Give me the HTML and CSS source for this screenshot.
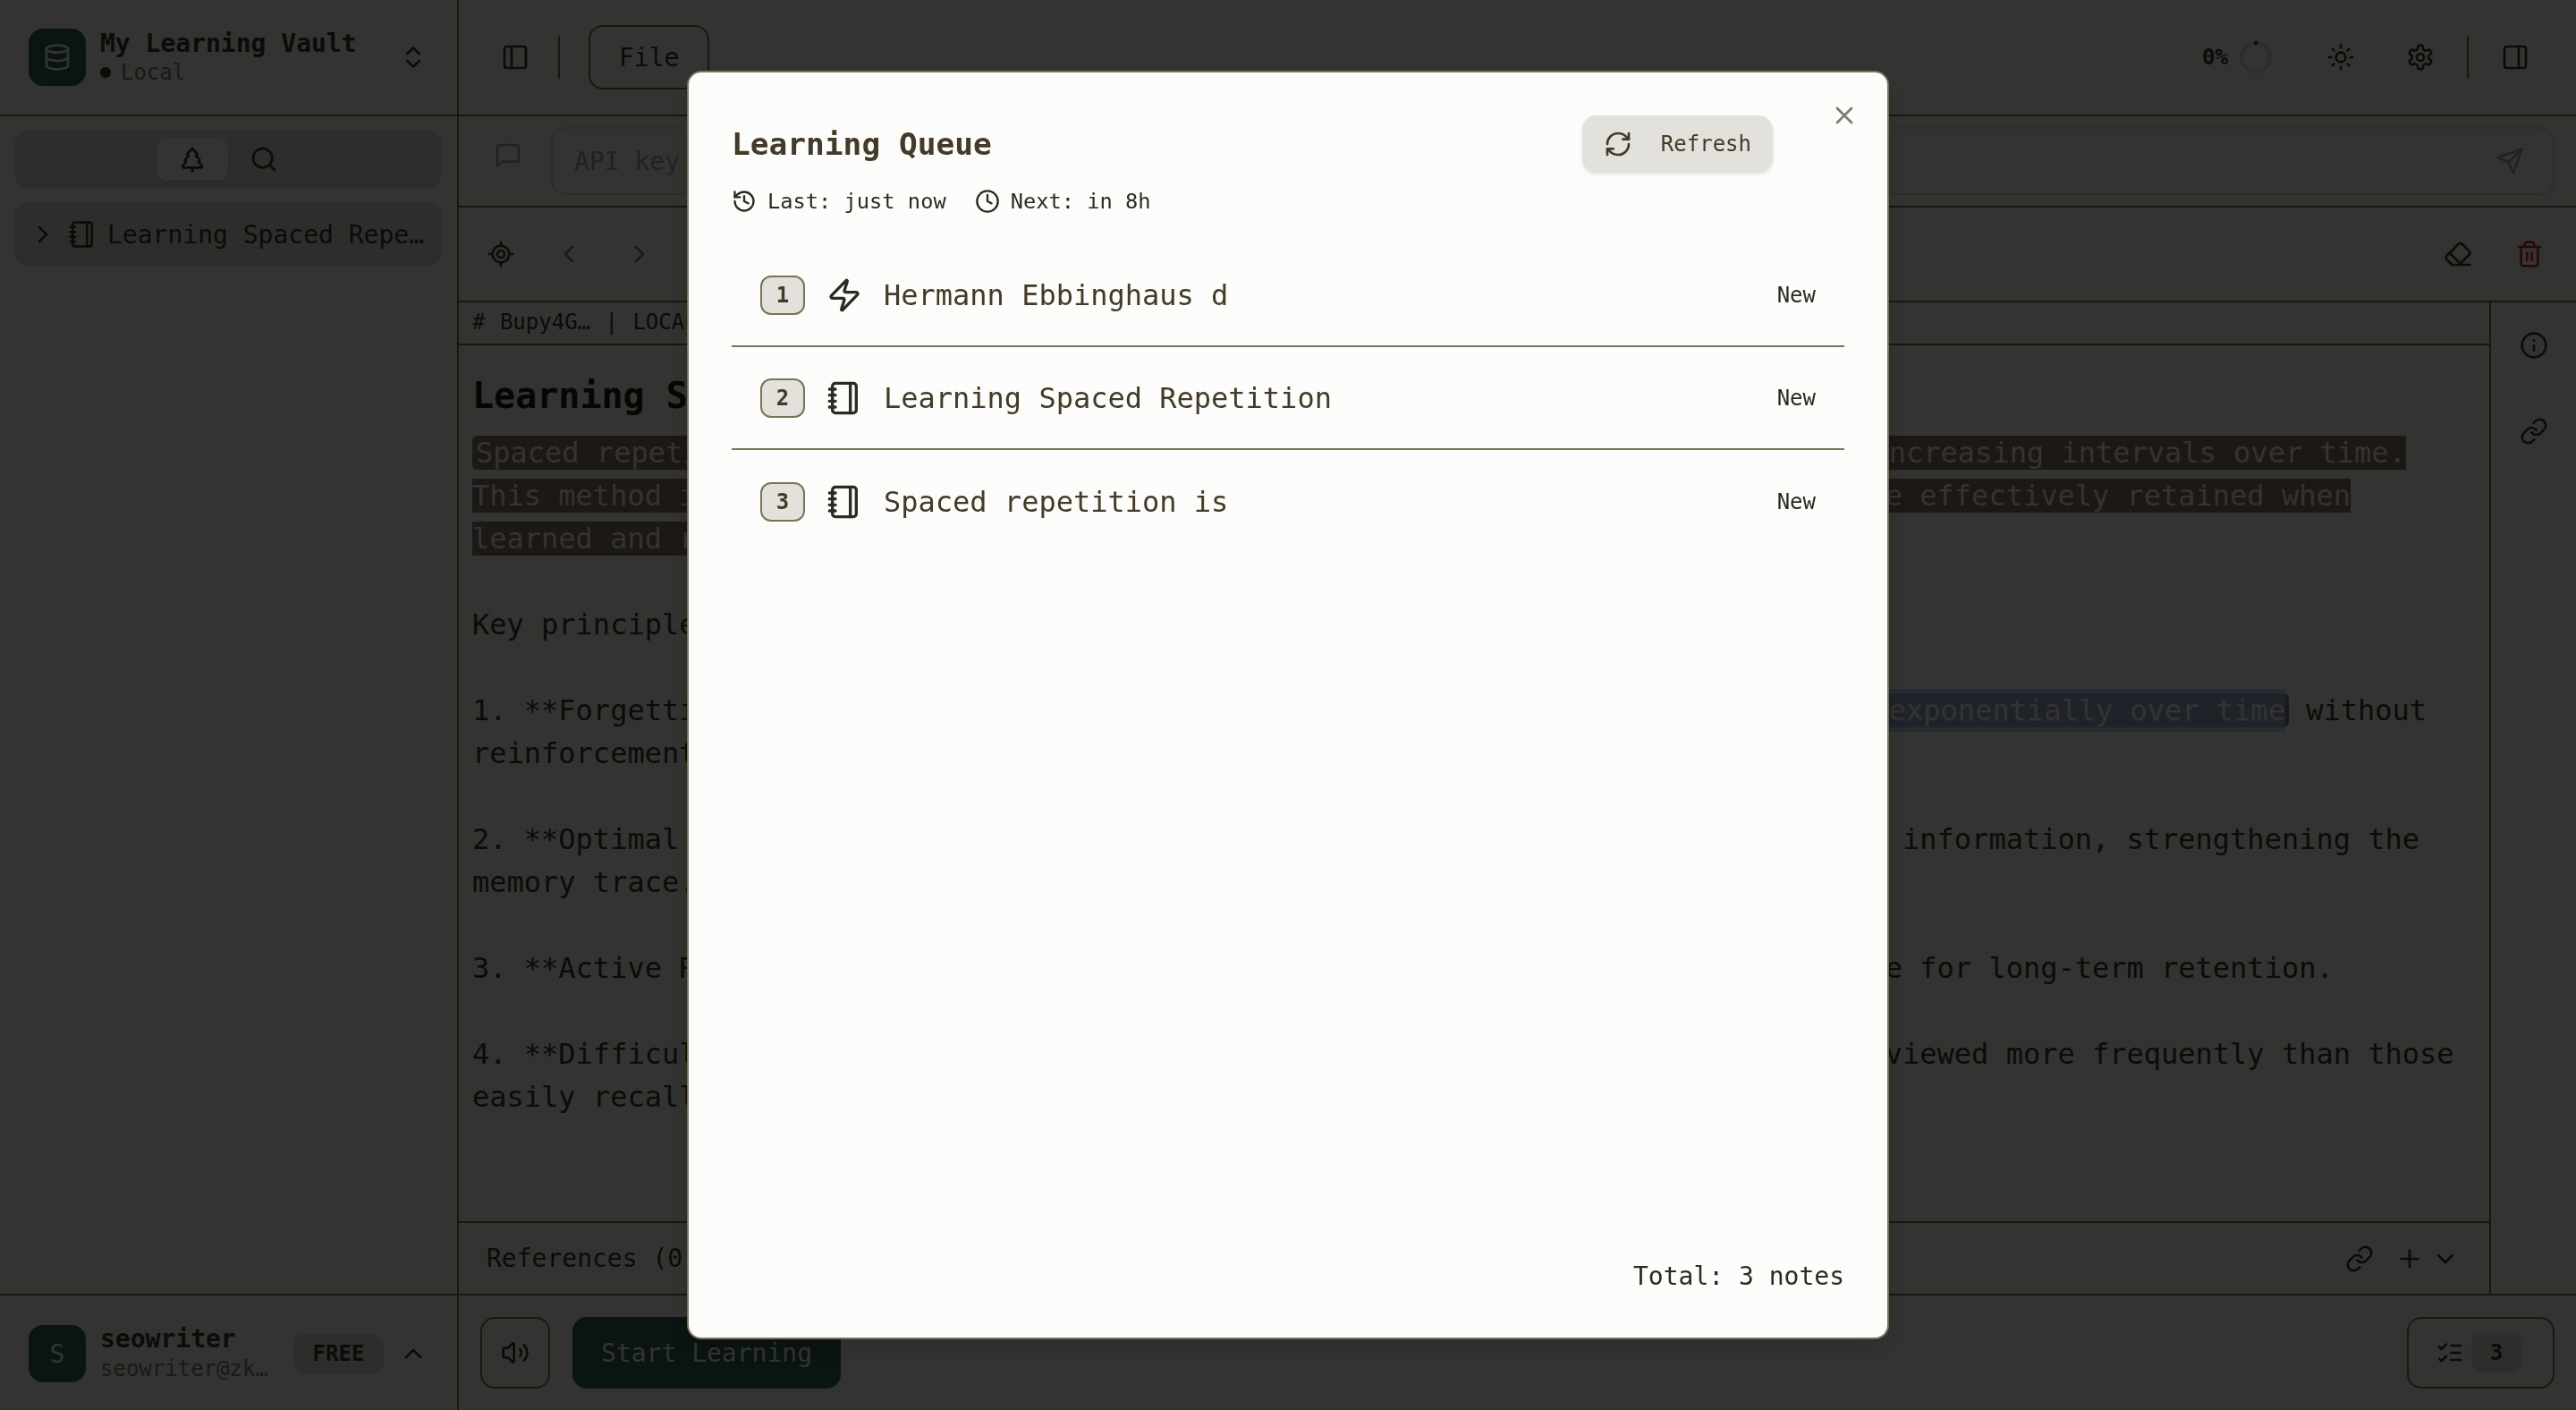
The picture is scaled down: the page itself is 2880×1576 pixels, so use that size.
FILE: index.html
```html
<!DOCTYPE html>
<html lang="en">
<head>
    <meta charset="UTF-8">
    <meta name="viewport" content="width=device-width, initial-scale=1.0">
    <title>My Learning Vault</title>
    <link rel="stylesheet" href="styles.css">
</head>
<body>
    <!-- Icon sprite -->
    <svg class="sprite" xmlns="http://www.w3.org/2000/svg">
        <symbol id="i-database" viewBox="0 0 24 24"><ellipse cx="12" cy="5" rx="9" ry="3"/><path d="M3 5V19A9 3 0 0 0 21 19V5"/><path d="M3 12A9 3 0 0 0 21 12"/></symbol>
        <symbol id="i-updown" viewBox="0 0 24 24"><path d="m7 15 5 5 5-5"/><path d="m7 9 5-5 5 5"/></symbol>
        <symbol id="i-panel-left" viewBox="0 0 24 24"><rect x="3" y="3" width="18" height="18" rx="2"/><path d="M9 3v18"/></symbol>
        <symbol id="i-panel-right" viewBox="0 0 24 24"><rect x="3" y="3" width="18" height="18" rx="2"/><path d="M15 3v18"/></symbol>
        <symbol id="i-tree" viewBox="0 0 24 24"><path d="m17 14 3 3.3a1 1 0 0 1-.7 1.7H4.7a1 1 0 0 1-.7-1.7L7 14h-.3a1 1 0 0 1-.7-1.7L9 9h-.2A1 1 0 0 1 8 7.3L12 3l4 4.3a1 1 0 0 1-.8 1.7H15l3 3.3a1 1 0 0 1-.7 1.7H17Z"/><path d="M12 22v-3"/></symbol>
        <symbol id="i-search" viewBox="0 0 24 24"><circle cx="11" cy="11" r="8"/><path d="m21 21-4.3-4.3"/></symbol>
        <symbol id="i-right" viewBox="0 0 24 24"><path d="m9 18 6-6-6-6"/></symbol>
        <symbol id="i-left" viewBox="0 0 24 24"><path d="m15 18-6-6 6-6"/></symbol>
        <symbol id="i-up" viewBox="0 0 24 24"><path d="m18 15-6-6-6 6"/></symbol>
        <symbol id="i-down" viewBox="0 0 24 24"><path d="m6 9 6 6 6-6"/></symbol>
        <symbol id="i-notebook" viewBox="0 0 24 24"><path d="M2 6h4"/><path d="M2 10h4"/><path d="M2 14h4"/><path d="M2 18h4"/><rect x="4" y="2" width="16" height="20" rx="2"/><path d="M16 2v20"/></symbol>
        <symbol id="i-chat" viewBox="0 0 24 24"><path d="M21 15a2 2 0 0 1-2 2H7l-4 4V5a2 2 0 0 1 2-2h14a2 2 0 0 1 2 2z"/></symbol>
        <symbol id="i-send" viewBox="0 0 24 24"><path d="m22 2-7 20-4-9-9-4Z"/><path d="M22 2 11 13"/></symbol>
        <symbol id="i-locate" viewBox="0 0 24 24"><path d="M2 12h3"/><path d="M19 12h3"/><path d="M12 2v3"/><path d="M12 19v3"/><circle cx="12" cy="12" r="7"/><circle cx="12" cy="12" r="3"/></symbol>
        <symbol id="i-sun" viewBox="0 0 24 24"><circle cx="12" cy="12" r="4"/><path d="M12 2v2"/><path d="M12 20v2"/><path d="m4.93 4.93 1.41 1.41"/><path d="m17.66 17.66 1.41 1.41"/><path d="M2 12h2"/><path d="M20 12h2"/><path d="m6.34 17.66-1.41 1.41"/><path d="m19.07 4.93-1.41 1.41"/></symbol>
        <symbol id="i-gear" viewBox="0 0 24 24"><path d="M12.22 2h-.44a2 2 0 0 0-2 2v.18a2 2 0 0 1-1 1.73l-.43.25a2 2 0 0 1-2 0l-.15-.08a2 2 0 0 0-2.73.73l-.22.38a2 2 0 0 0 .73 2.73l.15.1a2 2 0 0 1 1 1.72v.51a2 2 0 0 1-1 1.74l-.15.09a2 2 0 0 0-.73 2.73l.22.38a2 2 0 0 0 2.73.73l.15-.08a2 2 0 0 1 2 0l.43.25a2 2 0 0 1 1 1.73V20a2 2 0 0 0 2 2h.44a2 2 0 0 0 2-2v-.18a2 2 0 0 1 1-1.73l.43-.25a2 2 0 0 1 2 0l.15.08a2 2 0 0 0 2.73-.73l.22-.39a2 2 0 0 0-.73-2.73l-.15-.08a2 2 0 0 1-1-1.74v-.5a2 2 0 0 1 1-1.74l.15-.09a2 2 0 0 0 .73-2.73l-.22-.38a2 2 0 0 0-2.73-.73l-.15.08a2 2 0 0 1-2 0l-.43-.25a2 2 0 0 1-1-1.73V4a2 2 0 0 0-2-2z"/><circle cx="12" cy="12" r="3"/></symbol>
        <symbol id="i-eraser" viewBox="0 0 24 24"><path d="m7 21-4.3-4.3c-1-1-1-2.5 0-3.4l9.6-9.6c1-1 2.5-1 3.4 0l5.6 5.6c1 1 1 2.5 0 3.4L13 21"/><path d="M22 21H7"/><path d="m5 11 9 9"/></symbol>
        <symbol id="i-trash" viewBox="0 0 24 24"><path d="M3 6h18"/><path d="M19 6v14c0 1-1 2-2 2H7c-1 0-2-1-2-2V6"/><path d="M8 6V4c0-1 1-2 2-2h4c1 0 2 1 2 2v2"/><path d="M10 11v6"/><path d="M14 11v6"/></symbol>
        <symbol id="i-info" viewBox="0 0 24 24"><circle cx="12" cy="12" r="10"/><path d="M12 16v-4"/><path d="M12 8h.01"/></symbol>
        <symbol id="i-link" viewBox="0 0 24 24"><path d="M10 13a5 5 0 0 0 7.54.54l3-3a5 5 0 0 0-7.07-7.07l-1.72 1.71"/><path d="M14 11a5 5 0 0 0-7.54-.54l-3 3a5 5 0 0 0 7.07 7.07l1.71-1.71"/></symbol>
        <symbol id="i-plus" viewBox="0 0 24 24"><path d="M5 12h14"/><path d="M12 5v14"/></symbol>
        <symbol id="i-volume" viewBox="0 0 24 24"><path d="M11 4.702a.705.705 0 0 0-1.203-.498L6.413 7.587A1.4 1.4 0 0 1 5.416 8H3a1 1 0 0 0-1 1v6a1 1 0 0 0 1 1h2.416a1.4 1.4 0 0 1 .997.413l3.383 3.384A.705.705 0 0 0 11 19.298z"/><path d="M16 9a5 5 0 0 1 0 6"/><path d="M19.364 18.364a9 9 0 0 0 0-12.728"/></symbol>
        <symbol id="i-checks" viewBox="0 0 24 24"><path d="m3 17 2 2 4-4"/><path d="m3 7 2 2 4-4"/><path d="M13 6h8"/><path d="M13 12h8"/><path d="M13 18h8"/></symbol>
        <symbol id="i-history" viewBox="0 0 24 24"><path d="M3 12a9 9 0 1 0 9-9 9.75 9.75 0 0 0-6.74 2.74L3 8"/><path d="M3 3v5h5"/><path d="M12 7v5l4 2"/></symbol>
        <symbol id="i-clock" viewBox="0 0 24 24"><circle cx="12" cy="12" r="10"/><path d="M12 6v6l4 2"/></symbol>
        <symbol id="i-zap" viewBox="0 0 24 24"><path d="M4 14a1 1 0 0 1-.78-1.63l9.9-10.2a.5.5 0 0 1 .86.46l-1.92 6.02A1 1 0 0 0 13 10h7a1 1 0 0 1 .78 1.63l-9.9 10.2a.5.5 0 0 1-.86-.46l1.92-6.02A1 1 0 0 0 11 14z"/></symbol>
        <symbol id="i-refresh" viewBox="0 0 24 24"><path d="M3 12a9 9 0 0 1 9-9 9.75 9.75 0 0 1 6.74 2.74L21 8"/><path d="M21 3v5h-5"/><path d="M21 12a9 9 0 0 1-9 9 9.75 9.75 0 0 1-6.74-2.74L3 16"/><path d="M8 16H3v5"/></symbol>
        <symbol id="i-close" viewBox="0 0 24 24"><path d="M18 6 6 18"/><path d="m6 6 12 12"/></symbol>
    </svg>

    <!-- Sidebar -->
    <aside class="sidebar">
        <header class="vault-head">
            <div class="logo"><svg class="icon"><use href="#i-database"/></svg></div>
            <div class="vault-info">
                <div class="vault-name">My Learning Vault</div>
                <div class="vault-kind"><span class="dot"></span>Local</div>
            </div>
            <svg class="icon updown"><use href="#i-updown"/></svg>
        </header>

        <div class="side-tabs">
            <button class="side-tab active"><svg class="icon"><use href="#i-tree"/></svg></button>
            <button class="side-tab"><svg class="icon"><use href="#i-search"/></svg></button>
        </div>

        <div class="tree-item">
            <svg class="icon"><use href="#i-right"/></svg>
            <svg class="icon tree-note"><use href="#i-notebook"/></svg>
            <span class="tree-label">Learning Spaced Repetition</span>
        </div>

        <footer class="user-box">
            <div class="avatar">S</div>
            <div class="user-info">
                <div class="user-name">seowriter</div>
                <div class="user-mail">seowriter@zkid.app</div>
            </div>
            <span class="plan">FREE</span>
            <svg class="icon user-toggle"><use href="#i-up"/></svg>
        </footer>
    </aside>

    <!-- Main column -->
    <main class="main">
        <div class="topbar">
            <svg class="icon"><use href="#i-panel-left"/></svg>
            <span class="vsep"></span>
            <button class="file-btn">File</button>
            <div class="topbar-right">
                <span class="percent">0%</span>
                <span class="ring"></span>
                <svg class="icon sun"><use href="#i-sun"/></svg>
                <svg class="icon gear"><use href="#i-gear"/></svg>
                <span class="vsep"></span>
                <svg class="icon"><use href="#i-panel-right"/></svg>
            </div>
        </div>

        <div class="askbar">
            <svg class="icon dim ask-icon"><use href="#i-chat"/></svg>
            <div class="ask-input">
                <span>API key required</span>
                <svg class="icon dim"><use href="#i-send"/></svg>
            </div>
        </div>

        <div class="toolbar">
            <svg class="icon"><use href="#i-locate"/></svg>
            <svg class="icon nav-left muted"><use href="#i-left"/></svg>
            <svg class="icon nav-right muted"><use href="#i-right"/></svg>
            <div class="toolbar-right">
                <svg class="icon"><use href="#i-eraser"/></svg>
                <svg class="icon danger"><use href="#i-trash"/></svg>
            </div>
        </div>

        <div class="workspace">
            <div class="editor">
                <div class="note-id"># Bupy4G… | LOCAL</div>
                <div class="note-scroll">
                    <h1 class="note-title">Learning Spaced Repetition</h1>
                    <div class="note-body"><span class="mark-brown">Spaced repetition is a learning technique that involves reviewing information at increasing intervals over time.
This method is based on the spacing effect, which shows that memories and facts are effectively retained when
learned and reviewed over spaced sessions rather than crammed at once.</span>

Key principles:

1. **Forgetting Curve**: Hermann Ebbinghaus showed that memory retention declines <span class="mark-brown"><span class="mark-blue">exponentially over time</span></span> without
reinforcement through later review sessions.

2. **Optimal Intervals**: Reviewing right before you forget helps to reinforce the information, strengthening the
memory trace.

3. **Active Recall**: Actively retrieving information from memory is more effective for long-term retention.

4. **Difficulty Adjustment**: Items that are very difficult to remember must be reviewed more frequently than those
easily recalled.</div>
                </div>
                <div class="refs">
                    <span>References (0)</span>
                    <div class="refs-actions">
                        <svg class="icon"><use href="#i-link"/></svg>
                        <svg class="icon"><use href="#i-plus"/></svg>
                        <svg class="icon refs-more"><use href="#i-down"/></svg>
                    </div>
                </div>
            </div>
            <div class="rail">
                <svg class="icon"><use href="#i-info"/></svg>
                <svg class="icon"><use href="#i-link"/></svg>
            </div>
        </div>

        <footer class="actions">
            <button class="sound-btn"><svg class="icon"><use href="#i-volume"/></svg></button>
            <button class="start-btn">Start Learning</button>
            <button class="queue-btn">
                <svg class="icon"><use href="#i-checks"/></svg>
                <span class="queue-count">3</span>
            </button>
        </footer>
    </main>

    <!-- Modal de la file -->
    <div class="modal">
        <div class="modal-content">
            <svg class="icon modal-close"><use href="#i-close"/></svg>
            <div class="modal-head">
                <div>
                    <h2>Learning Queue</h2>
                    <div class="modal-meta">
                        <svg class="icon"><use href="#i-history"/></svg>
                        <span>Last: just now</span>
                        <svg class="icon meta-next"><use href="#i-clock"/></svg>
                        <span>Next: in 8h</span>
                    </div>
                </div>
                <button class="refresh-btn">
                    <svg class="icon"><use href="#i-refresh"/></svg>
                    Refresh
                </button>
            </div>

            <ul class="queue">
                <li class="queue-row">
                    <span class="queue-num">1</span>
                    <svg class="icon"><use href="#i-zap"/></svg>
                    <span class="queue-title">Hermann Ebbinghaus d</span>
                    <span class="queue-state">New</span>
                </li>
                <li class="queue-row">
                    <span class="queue-num">2</span>
                    <svg class="icon"><use href="#i-notebook"/></svg>
                    <span class="queue-title">Learning Spaced Repetition</span>
                    <span class="queue-state">New</span>
                </li>
                <li class="queue-row">
                    <span class="queue-num">3</span>
                    <svg class="icon"><use href="#i-notebook"/></svg>
                    <span class="queue-title">Spaced repetition is</span>
                    <span class="queue-state">New</span>
                </li>
            </ul>

            <div class="modal-total">Total: 3 notes</div>
        </div>
    </div>
</body>
</html>
```

FILE: styles.css
```css
/* Global */
* {
    box-sizing: border-box;
}

html, body {
    height: 100%;
}

body {
    margin: 0;
    display: flex;
    overflow: hidden;
    font-family: 'DejaVu Sans Mono', 'Liberation Mono', monospace;
    font-size: 28px;
    background-color: #fcfcfa;
    color: #433a28;
}

button {
    font: inherit;
    color: inherit;
    background: none;
    border: none;
    padding: 0;
}

.sprite {
    display: none;
}

.icon {
    width: 32px;
    height: 32px;
    flex: none;
    fill: none;
    stroke: currentColor;
    stroke-width: 2;
    stroke-linecap: round;
    stroke-linejoin: round;
}

.dim {
    color: #aaa89f;
}

.muted {
    color: #857f70;
}

.danger {
    color: #dc2626;
}

.vsep {
    width: 2px;
    height: 48px;
    background-color: #7d7256;
}

/* Sidebar */
.sidebar {
    width: 513px;
    flex: none;
    display: flex;
    flex-direction: column;
    border-right: 2px solid #7d7256;
}

.vault-head {
    height: 130px;
    flex: none;
    display: flex;
    align-items: center;
    padding: 0 32px;
    border-bottom: 2px solid #7d7256;
}

.logo {
    width: 64px;
    height: 64px;
    flex: none;
    display: flex;
    justify-content: center;
    align-items: center;
    border-radius: 16px;
    background-color: #32645a;
    color: #fff;
}

.vault-info {
    margin-left: 16px;
    flex: 1;
}

.vault-name {
    font-weight: bold;
    line-height: 34px;
}

.vault-kind {
    display: flex;
    align-items: center;
    font-size: 24px;
    line-height: 30px;
    color: #857f70;
}

.dot {
    width: 12px;
    height: 12px;
    margin-right: 11px;
    border-radius: 50%;
    background-color: #433a28;
}

.updown {
    margin-right: 1px;
}

.side-tabs {
    height: 64px;
    margin: 16px 17px 0 16px;
    padding: 8px;
    display: flex;
    justify-content: center;
    border-radius: 16px;
    background-color: #e2e1dc;
}

.side-tab {
    width: 80px;
    height: 48px;
    display: flex;
    justify-content: center;
    align-items: center;
    border-radius: 12px;
}

.side-tab.active {
    background-color: #fcfcfa;
    box-shadow: 0 2px 4px rgba(0, 0, 0, 0.1);
}

.tree-item {
    height: 72px;
    margin: 16px 17px 0 16px;
    padding: 0 16px;
    display: flex;
    align-items: center;
    border-radius: 16px;
    background-color: #e2e1dc;
}

.tree-note {
    margin-left: 12px;
}

.tree-label {
    margin-left: 12px;
    overflow: hidden;
    white-space: nowrap;
    text-overflow: ellipsis;
}

.user-box {
    height: 130px;
    margin-top: auto;
    padding: 2px 32px 0;
    display: flex;
    align-items: center;
    border-top: 2px solid #7d7256;
}

.avatar {
    width: 64px;
    height: 64px;
    flex: none;
    display: flex;
    justify-content: center;
    align-items: center;
    border-radius: 16px;
    background-color: #32645a;
    color: #fff;
}

.user-info {
    width: 192px;
    margin-left: 16px;
    flex: none;
}

.user-name {
    font-weight: bold;
    line-height: 34px;
}

.user-mail {
    font-size: 24px;
    line-height: 32px;
    color: #857f70;
    overflow: hidden;
    white-space: nowrap;
    text-overflow: ellipsis;
}

.plan {
    width: 101px;
    height: 44px;
    margin-left: 24px;
    flex: none;
    display: flex;
    justify-content: center;
    align-items: center;
    font-size: 24px;
    font-weight: bold;
    border-radius: 12px;
    background-color: #e2e1dc;
}

.user-toggle {
    margin-left: 17px;
}

/* Main column */
.main {
    flex: 1;
    min-width: 0;
    display: flex;
    flex-direction: column;
}

.topbar {
    height: 130px;
    flex: none;
    display: flex;
    align-items: center;
    padding: 0 52px 0 47px;
    border-bottom: 2px solid #7d7256;
}

.topbar .vsep {
    margin: 0 32px;
}

.file-btn {
    height: 72px;
    padding: 0 32px;
    border: 2px solid #7d7256;
    border-radius: 16px;
}

.topbar-right {
    margin-left: auto;
    display: flex;
    align-items: center;
}

.percent {
    margin-right: 13px;
    font-size: 24px;
    font-weight: bold;
}

.ring {
    position: relative;
    width: 36px;
    height: 36px;
    border: 4px solid #e2e1dc;
    border-radius: 50%;
}

.ring::after {
    content: '';
    position: absolute;
    top: -4px;
    left: 12px;
    width: 4px;
    height: 4px;
    background-color: #433a28;
}

.sun {
    margin-left: 61px;
}

.gear {
    margin-left: 57px;
}

.topbar-right .vsep {
    margin: 0 36px;
}

.askbar {
    height: 102px;
    flex: none;
    display: flex;
    align-items: center;
    padding: 0 24px 0 39px;
    border-bottom: 2px solid #7d7256;
}

.ask-icon {
    margin-bottom: 12px;
}

.ask-input {
    height: 76px;
    margin-left: 32px;
    padding: 0 32px 0 24px;
    flex: 1;
    display: flex;
    align-items: center;
    justify-content: space-between;
    color: #aaa89f;
    border: 2px solid #e2e1dc;
    border-radius: 16px;
}

.toolbar {
    height: 106px;
    flex: none;
    display: flex;
    align-items: center;
    padding: 0 36px 0 31px;
    border-bottom: 2px solid #7d7256;
}

.nav-left {
    margin-left: 44px;
}

.nav-right {
    margin-left: 47px;
}

.toolbar-right {
    margin-left: auto;
    display: flex;
    gap: 48px;
}

.workspace {
    flex: 1;
    min-height: 0;
    display: flex;
}

.editor {
    flex: 1;
    min-width: 0;
    display: flex;
    flex-direction: column;
}

.note-id {
    height: 48px;
    flex: none;
    padding: 0 15px;
    font-size: 24px;
    line-height: 44px;
    word-spacing: 2px;
    border-bottom: 2px solid #7d7256;
}

.note-scroll {
    flex: 1;
    min-height: 0;
    padding: 26px 15px 0;
    overflow: hidden;
}

.note-title {
    margin: 0 0 10px;
    font-size: 40px;
    line-height: 60px;
    color: #26201a;
}

.note-body {
    font-size: 32px;
    line-height: 48px;
    white-space: pre;
}

.mark-brown {
    padding: 0 4px;
    border-radius: 6px;
    color: #fcfcfa;
    background-color: #8c7869;
}

.mark-blue {
    display: inline-block;
    height: 48px;
    vertical-align: top;
    background-color: rgba(161, 203, 255, 0.67);
}

.refs {
    height: 81px;
    flex: none;
    display: flex;
    align-items: center;
    justify-content: space-between;
    padding: 0 33px 0 31px;
    border-top: 2px solid #7d7256;
}

.refs-actions {
    display: flex;
    align-items: center;
    gap: 24px;
}

.refs-more {
    margin-left: -16px;
}

.rail {
    width: 97px;
    flex: none;
    padding-top: 32px;
    display: flex;
    flex-direction: column;
    align-items: center;
    gap: 64px;
    border-left: 2px solid #7d7256;
}

.actions {
    height: 130px;
    flex: none;
    display: flex;
    align-items: center;
    padding: 0 24px;
    border-top: 2px solid #7d7256;
}

.sound-btn {
    width: 78px;
    height: 80px;
    display: flex;
    justify-content: center;
    align-items: center;
    border: 2px solid #7d7256;
    border-radius: 16px;
}

.start-btn {
    width: 300px;
    height: 80px;
    margin-left: 25px;
    color: #fcfcfa;
    border-radius: 16px;
    background-color: #32645a;
}

.queue-btn {
    width: 165px;
    height: 80px;
    margin-left: auto;
    padding: 0 30px;
    display: flex;
    align-items: center;
    gap: 8px;
    border: 2px solid #7d7256;
    border-radius: 16px;
}

.queue-count {
    width: 56px;
    height: 44px;
    font-size: 24px;
    font-weight: bold;
    line-height: 44px;
    text-align: center;
    border-radius: 12px;
    background-color: #e2e1dc;
}

/* Modal */
.modal {
    position: fixed;
    top: 0;
    left: 0;
    width: 100%;
    height: 100%;
    display: flex;
    justify-content: center;
    align-items: center;
    background-color: rgba(0, 0, 0, 0.8);
}

.modal-content {
    position: relative;
    width: 1344px;
    height: 90vh;
    padding: 48px;
    display: flex;
    flex-direction: column;
    color: #2e2a22;
    border: 2px solid #7d7256;
    border-radius: 16px;
    background-color: #fcfcfa;
    box-shadow: 0 10px 30px rgba(0, 0, 0, 0.15);
}

.modal-close {
    position: absolute;
    top: 32px;
    right: 32px;
    color: #7d7a70;
}

.modal-head {
    display: flex;
    justify-content: space-between;
    align-items: flex-start;
    padding-right: 80px;
}

.modal-head h2 {
    margin: 6px 0 0;
    font-size: 34.5px;
    line-height: 52px;
    color: #433a28;
}

.modal-meta {
    margin-top: 22px;
    display: flex;
    align-items: center;
    font-size: 23.7px;
    line-height: 32px;
}

.modal-meta .icon {
    width: 28px;
    height: 28px;
    margin-right: 12px;
}

.modal-meta .meta-next {
    margin-left: 32px;
}

.refresh-btn {
    height: 64px;
    padding: 0 24px;
    display: flex;
    align-items: center;
    gap: 32px;
    font-size: 24px;
    color: #433a28;
    border-radius: 16px;
    background-color: #e2e1dc;
    box-shadow: 0 2px 4px rgba(0, 0, 0, 0.1);
}

.queue {
    list-style: none;
    margin: 32px 0 0;
    padding: 0;
}

.queue-row {
    height: 115px;
    padding: 2px 32px 0;
    display: flex;
    align-items: center;
    color: #433a28;
    border-bottom: 2px solid #7d7256;
}

.queue-row:last-child {
    border-bottom: none;
}

.queue-row .icon {
    width: 40px;
    height: 40px;
    margin-left: 24px;
    color: #2e2a22;
}

.queue-num {
    width: 50px;
    height: 44px;
    font-size: 24px;
    font-weight: bold;
    line-height: 40px;
    text-align: center;
    border: 2px solid #7d7256;
    border-radius: 12px;
    background-color: #e2e1dc;
}

.queue-title {
    margin-left: 24px;
    font-size: 32px;
}

.queue-state {
    margin-left: auto;
    font-size: 24px;
    color: #2e2a22;
}

.modal-total {
    margin-top: auto;
    margin-bottom: -2px;
    text-align: right;
    line-height: 44px;
}
```
